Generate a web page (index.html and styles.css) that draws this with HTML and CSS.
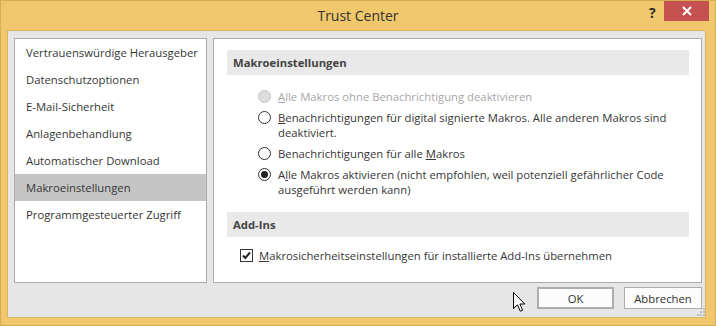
FILE: index.html
```html
<!DOCTYPE html>
<html lang="de">
<head>
    <meta charset="UTF-8">
    <title>Trust Center</title>
    <link rel="stylesheet" href="styles.css">
</head>
<body>

<div class="window">
    <!-- title bar -->
    <div class="titlebar">
        <span class="title">Trust Center</span>
        <span class="help">?</span>
        <span class="close">
            <svg width="10" height="10" viewBox="0 0 10 10">
                <path d="M1 1 L9 9 M9 1 L1 9" stroke="#fff" stroke-width="2" fill="none"/>
            </svg>
        </span>
    </div>

    <div class="client">
        <div class="panes">
            <!-- category list -->
            <ul class="nav">
                <li>Vertrauenswürdige Herausgeber</li>
                <li>Datenschutzoptionen</li>
                <li>E-Mail-Sicherheit</li>
                <li>Anlagenbehandlung</li>
                <li>Automatischer Download</li>
                <li class="active">Makroeinstellungen</li>
                <li>Programmgesteuerter Zugriff</li>
            </ul>

            <!-- settings -->
            <div class="settings">
                <div class="section-head">Makroeinstellungen</div>
                <div class="options">
                    <div class="option disabled">
                        <span class="radio"></span>
                        <span class="label"><u>A</u>lle Makros ohne Benachrichtigung deaktivieren</span>
                    </div>
                    <div class="option">
                        <span class="radio"></span>
                        <span class="label"><u>B</u>enachrichtigungen für digital signierte Makros. Alle anderen Makros sind<br>deaktiviert.</span>
                    </div>
                    <div class="option">
                        <span class="radio"></span>
                        <span class="label">Benachrichtigungen für alle <u>M</u>akros</span>
                    </div>
                    <div class="option">
                        <span class="radio checked"></span>
                        <span class="label">A<u>l</u>le Makros aktivieren (nicht empfohlen, weil potenziell gefährlicher Code<br>ausgeführt werden kann)</span>
                    </div>
                </div>

                <div class="section-head">Add-Ins</div>
                <div class="checkrow">
                    <span class="checkbox">
                        <svg width="11" height="11" viewBox="0 0 11 11">
                            <path d="M2 5.5 L4.3 8 L9 2.5" stroke="#222" stroke-width="2" fill="none"/>
                        </svg>
                    </span>
                    <span class="label"><u>M</u>akrosicherheitseinstellungen für installierte Add-Ins übernehmen</span>
                </div>
            </div>
        </div>

        <div class="footer">
            <button class="btn default">OK</button>
            <button class="btn">Abbrechen</button>
        </div>

        <svg class="grip" width="8" height="8" viewBox="0 0 8 8">
            <rect x="6" y="0" width="2" height="2" fill="#bcbcbc"/>
            <rect x="3" y="3" width="2" height="2" fill="#bcbcbc"/>
            <rect x="6" y="3" width="2" height="2" fill="#bcbcbc"/>
            <rect x="0" y="6" width="2" height="2" fill="#bcbcbc"/>
            <rect x="3" y="6" width="2" height="2" fill="#bcbcbc"/>
            <rect x="6" y="6" width="2" height="2" fill="#bcbcbc"/>
        </svg>
    </div>

    <!-- mouse pointer -->
    <svg class="cursor" width="13" height="21" viewBox="0 0 13 21">
        <path d="M0.5 0.5 V16.5 L4.5 12.8 L7.3 19.2 L9.6 18.2 L6.9 12 H11.8 Z" fill="#fff" stroke="#000" stroke-width="1"/>
    </svg>
</div>

</body>
</html>
```

FILE: styles.css
```css
body {
    margin: 0;
    padding: 0;
    font-family: "Segoe UI", "Open Sans", sans-serif;
    font-size: 11.3px;
    color: #363636;
}

.window {
    position: relative;
    box-sizing: border-box;
    width: 716px;
    height: 326px;
    background-color: #f0c76b;
    border: 1px solid #d6ad55;
    display: flex;
    flex-direction: column;
    overflow: hidden;
}

/* title bar */

.titlebar {
    position: relative;
    height: 29px;
    display: flex;
    justify-content: center;
    align-items: center;
}

.title {
    font-size: 14px;
    color: #333;
    margin-top: -1px;
}

.help {
    position: absolute;
    top: 2px;
    left: 648px;
    font-size: 14px;
    font-weight: bold;
    color: #2b2b2b;
}

.close {
    position: absolute;
    top: -1px;
    right: 6px;
    width: 45px;
    height: 21px;
    background-color: #c75050;
    display: flex;
    justify-content: center;
    align-items: center;
}

/* client area */

.client {
    position: relative;
    flex: 1;
    margin: 0 9px 7px 6px;
    background-color: #e6e6e6;
    border: 1px solid #d8b563;
    display: flex;
    flex-direction: column;
    padding: 7px 3px 8px 6px;
}

.panes {
    display: flex;
    gap: 6px;
    height: 245px;
}

.nav {
    list-style: none;
    margin: 0;
    padding: 0;
    width: 191px;
    background-color: #fff;
    border: 1px solid #ababab;
}

.nav li {
    height: 27px;
    line-height: 27px;
    padding-left: 11px;
    white-space: nowrap;
}

.nav li.active {
    background-color: #c5c5c5;
}

.settings {
    flex: 1;
    background-color: #fff;
    border: 1px solid #ababab;
    padding: 11px 12px 0 13px;
}

.section-head {
    height: 25px;
    line-height: 25px;
    padding-left: 6px;
    background-color: #e9e9e9;
    font-weight: bold;
    color: #444;
}

.options {
    display: flex;
    flex-direction: column;
    gap: 6px;
    padding: 14px 0 15px 31px;
}

.option {
    display: flex;
    align-items: flex-start;
    gap: 7px;
    line-height: 15px;
    white-space: nowrap;
}

.option.disabled {
    color: #a7a7a7;
}

.radio {
    box-sizing: border-box;
    flex: none;
    width: 13px;
    height: 13px;
    margin-top: 1px;
    border: 1px solid #333;
    border-radius: 50%;
    background-color: #fff;
    display: flex;
    justify-content: center;
    align-items: center;
}

.option.disabled .radio {
    border-color: #c4c4c4;
    background-color: #dedede;
}

.radio.checked::after {
    content: "";
    width: 7px;
    height: 7px;
    border-radius: 50%;
    background-color: #222;
}

.checkrow {
    display: flex;
    align-items: center;
    gap: 6px;
    padding: 11px 0 0 13px;
    line-height: 15px;
}

.checkbox {
    box-sizing: border-box;
    width: 13px;
    height: 13px;
    border: 1px solid #333;
    background-color: #fff;
    display: flex;
    justify-content: center;
    align-items: center;
}

/* buttons */

.footer {
    display: flex;
    justify-content: flex-end;
    gap: 10px;
    margin-top: 4px;
}

.btn {
    box-sizing: border-box;
    width: 78px;
    height: 22px;
    font-family: inherit;
    font-size: 11.3px;
    color: #333;
    background-color: #fcfcfc;
    border: 1px solid #adadad;
    padding: 0;
}

.btn.default {
    width: 77px;
    border: 2px solid #adadad;
}

.grip {
    position: absolute;
    right: 0;
    bottom: 1px;
}

.cursor {
    position: absolute;
    left: 512px;
    top: 291px;
}
```
